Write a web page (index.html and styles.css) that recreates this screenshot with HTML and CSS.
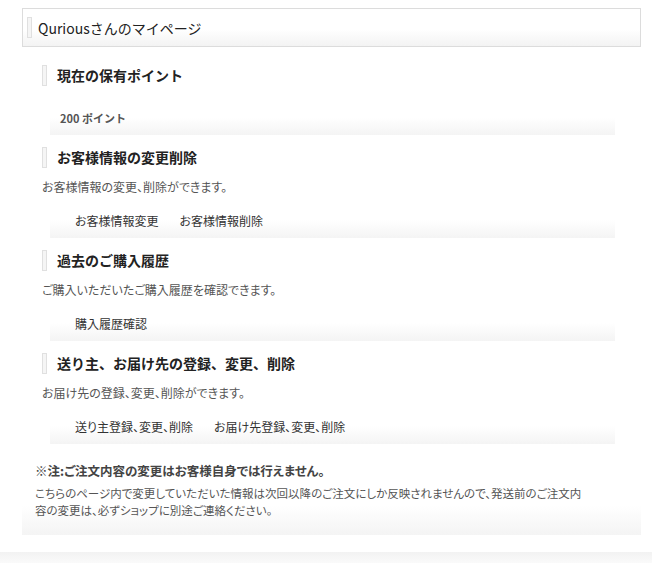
FILE: index.html
```html
<!DOCTYPE html>
<html>
<head>
  <meta charset="utf-8" />
  <title>マイページ</title>
  <link rel="stylesheet" href="styles.css">
</head>
<body>
  <div class="mypage">
    <h2 class="page-title">Quriousさんのマイページ</h2>

    <div class="mypage-body">
      <!-- ポイント -->
      <div class="block">
        <h3 class="block-title">現在の保有ポイント</h3>
        <div class="block-row points">200 ポイント</div>
      </div>

      <!-- お客様情報 -->
      <div class="block">
        <h3 class="block-title">お客様情報の変更削除</h3>
        <p class="block-desc">お客様情報の変更、削除ができます。</p>
        <ul class="block-row links">
          <li><a href="#">お客様情報変更</a></li>
          <li><a href="#">お客様情報削除</a></li>
        </ul>
      </div>

      <!-- 購入履歴 -->
      <div class="block">
        <h3 class="block-title">過去のご購入履歴</h3>
        <p class="block-desc">ご購入いただいたご購入履歴を確認できます。</p>
        <ul class="block-row links">
          <li><a href="#">購入履歴確認</a></li>
        </ul>
      </div>

      <!-- 送り主・お届け先 -->
      <div class="block">
        <h3 class="block-title">送り主、お届け先の登録、変更、削除</h3>
        <p class="block-desc">お届け先の登録、変更、削除ができます。</p>
        <ul class="block-row links">
          <li><a href="#">送り主登録、変更、削除</a></li>
          <li><a href="#">お届け先登録、変更、削除</a></li>
        </ul>
      </div>

      <div class="notice">
        <p class="notice-title">※注:ご注文内容の変更はお客様自身では行えません。</p>
        <p class="notice-text">こちらのページ内で変更していただいた情報は次回以降のご注文にしか反映されませんので、発送前のご注文内<br>容の変更は、必ずショップに別途ご連絡ください。</p>
      </div>
    </div>
  </div>

  <div class="footer-band"></div>
</body>
</html>
```

FILE: styles.css
```css
/* Grundlayout */
html, body {
  margin: 0;
  padding: 0;
  background: #fff;
  color: #333;
  font-family: "Noto Sans CJK JP", "Liberation Sans", sans-serif;
}

.mypage {
  width: 619px;
  margin: 8px 0 0 22px;
}

/* Seitentitel */
.page-title {
  display: flex;
  align-items: center;
  gap: 6px;
  height: 39px;
  margin: 0;
  padding: 0 0 0 4px;
  box-sizing: border-box;
  border: 1px solid #dcdcdc;
  background: linear-gradient(to bottom, #fff 55%, #f3f3f3 100%);
  font-size: 14px;
  font-weight: normal;
  color: #222;
}

.page-title::before,
.block-title::before {
  content: "";
  display: block;
  width: 3px;
  height: 19px;
  border: 1px solid #e0e0e0;
  background: #f5f5f5;
}

.mypage-body {
  padding: 18px 0 16px;
  background: linear-gradient(to bottom, #fff 94%, #f4f4f4 100%);
}

/* Blöcke */
.block {
  margin-bottom: 12px;
}

.block-title {
  display: flex;
  align-items: center;
  gap: 10px;
  height: 20px;
  margin: 0 0 0 20px;
  font-size: 14px;
  font-weight: bold;
  color: #222;
}

.block-desc {
  margin: 11px 0 0 20px;
  font-size: 12px;
  line-height: 18px;
  color: #555;
  font-feature-settings: "palt";
}

.block-row {
  display: flex;
  align-items: center;
  gap: 21px;
  width: 565px;
  height: 36px;
  margin: 6px 0 0 28px;
  box-sizing: border-box;
  list-style: none;
  background: linear-gradient(to bottom, #fff 50%, #f4f4f4 100%);
}

.block-row.points {
  height: 35px;
  margin-top: 15px;
  padding-left: 10px;
  font-size: 11px;
  font-weight: bold;
  color: #555;
}

.block-row.links {
  padding: 0 0 0 25px;
  font-size: 12px;
  font-feature-settings: "palt";
}

.block-row a {
  color: #333;
  text-decoration: none;
}

/* Hinweis */
.notice {
  margin: 18px 0 0 13px;
}

.notice-title {
  margin: 0;
  font-size: 12.5px;
  font-weight: bold;
  line-height: 18px;
  color: #444;
  font-feature-settings: "palt";
}

.notice-text {
  margin: 5px 0 0;
  font-size: 11.5px;
  line-height: 17px;
  color: #555;
  font-feature-settings: "palt";
}

.footer-band {
  height: 11px;
  margin-top: 17px;
  background: linear-gradient(to bottom, #f2f2f2, #fafafa);
}
```
